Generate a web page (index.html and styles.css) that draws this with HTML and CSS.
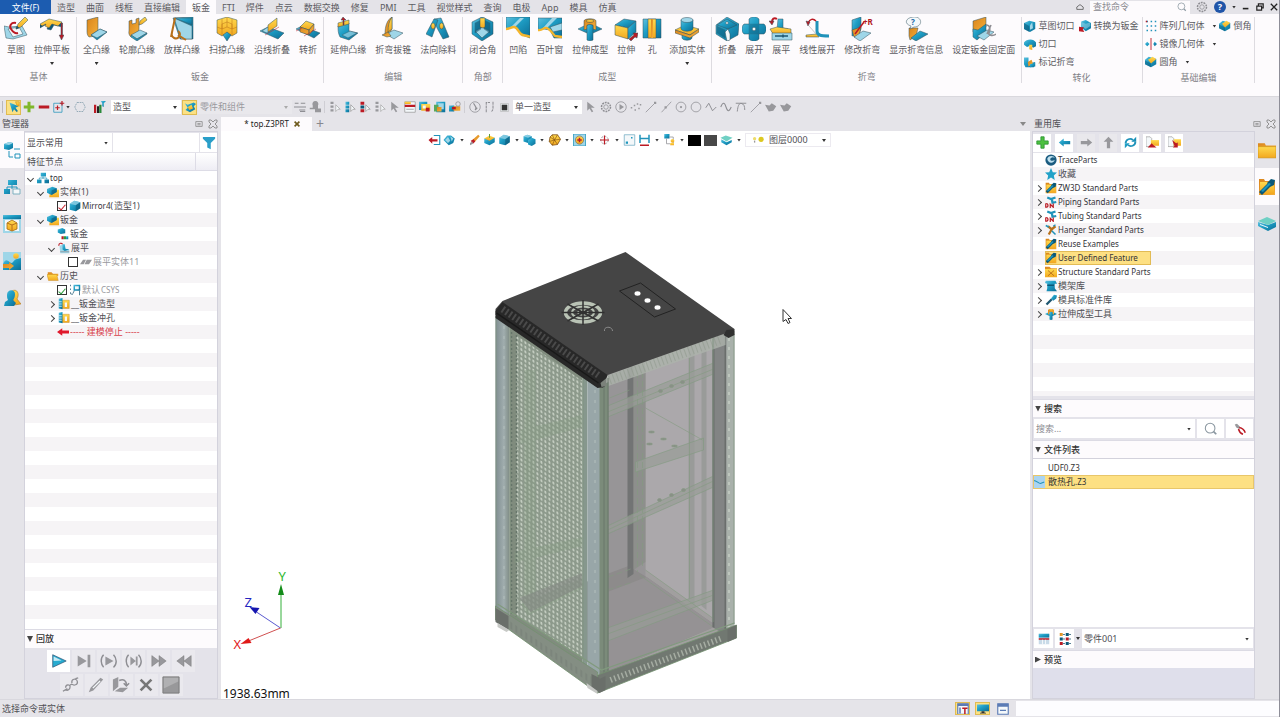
FILE: index.html
```html
<!DOCTYPE html>
<html lang="zh-CN">
<head>
<meta charset="utf-8">
<title>top.Z3PRT</title>
<link rel="stylesheet" href="styles.css">
</head>
<body>
<svg class="defs" aria-hidden="true">
<defs>
<linearGradient id="gb" x1="0" y1="0" x2="1" y2="1"><stop offset="0" stop-color="#5fc0de"/><stop offset=".4" stop-color="#1f9fc6"/><stop offset="1" stop-color="#0c6c94"/></linearGradient>
<linearGradient id="go" x1="0" y1="0" x2="1" y2="1"><stop offset="0" stop-color="#d9841c"/><stop offset="1" stop-color="#f5b03a"/></linearGradient>
<linearGradient id="gy" x1="0" y1="0" x2="0" y2="1"><stop offset="0" stop-color="#ffd94e"/><stop offset="1" stop-color="#f2a81f"/></linearGradient>
<symbol id="b-sketch" viewBox="0 0 24 24"><path class="lt" d="M0 9l5 1 13-1 5 9-14 4-7-1z"/><path class="w" d="M4 12l11-2 4 7-10 3z"/><path class="nf rs" stroke-width="2" d="M12 6c-5-1-7 3-5 6s4 5 7 4"/><path class="y" d="M12 12l2-5 7-7 3 3-7 7z"/><path class="dk" d="M12 12l1-3 2 2z"/></symbol>
<symbol id="b-plate" viewBox="0 0 24 24"><path class="dk" d="M0 8l9-4 13 2v4l-8-2-3 5-4-1 2-4-4 0-5 3z"/><path class="y" d="M0 7l9-5 13 3-4 4-6-2-3 4-4-2 1-2-4 2z"/><path class="r" d="M21 6h1.500v12h1.500l-2.500 5-2.300-5h1.800z"/></symbol>
<symbol id="b-flange" viewBox="0 0 24 24"><path class="o" d="M2 3l11-3v12c0 3-2 5-2 7l-7 1c-2-2-2-4-2-6z"/><path class="b" d="M6 18l9-6 7 3-10 8z"/><path class="lt" d="M6 18l9-6 7 3-10 6z"/></symbol>
<symbol id="b-contour" viewBox="0 0 24 24"><path class="o" d="M4 4l3-1v4l4-1V2l3-1v11c0 3-3 4-3 6l-5 2c-3-3-2-5-2-7z"/><path class="lt" d="M6 18l9-5 7 3-10 6z"/><path class="b" d="M6 18l6 4 10-6v1l-10 7-6-4z"/><path class="y" d="M14 8l1-4 5-4 2 3-5 4z"/></symbol>
<symbol id="b-loft" viewBox="0 0 24 24"><path class="b" d="M3 1l20-1v22H10z"/><path class="lt" d="M4 1l18 8v13H11z"/><path class="b" d="M5 1l17 0v7z"/><path class="nf os" stroke-width="2" d="M2 16a4 4 0 1 0 6-2M5 1L1 20M8 18l8 5"/></symbol>
<symbol id="b-sweep" viewBox="0 0 24 24"><path class="y" d="M2 3l10-3 10 3v13l-5 3-5-3-5 3-5-3z"/><path class="nf os" d="M7 2v16M17 2v16M2 10l5 2 5-2 5 2 5-2M12 0v10M7 12v-5l5-2 5 2v5"/><path class="b" d="M8 18l4-3 4 3-4 6z"/></symbol>
<symbol id="b-linefold" viewBox="0 0 24 24"><path class="b" d="M0 14l8-4 16 6-6 6z"/><path class="lt" d="M8 10l5 2-6 4-5-2z"/><path class="y" d="M8 15V8l9-7v8z"/><path class="nf rs" d="M5 18l14-8"/></symbol>
<symbol id="b-jog" viewBox="0 0 24 24"><path class="b" d="M0 12l6-3 18 7-6 5z"/><path class="y" d="M4 10l6-6 8 3-5 6z"/><path class="o" d="M4 10l9 3v5l-9-3zM13 13l5-6v5l-5 6z"/><path class="nf rs" d="M8 19l12-7M0 14l6-3"/></symbol>
<symbol id="b-extflange" viewBox="0 0 24 24"><path class="b" d="M2 9l11-3v8l9 2-9 7-9-3c-2-4-2-7-2-11z"/><path class="lt" d="M6 18l8-4 7 2-9 5z" opacity=".7"/><path class="y" d="M2 6l11-3v4L2 10z"/><path class="r" d="M5 3l2-3 3 3H8v5H7V3z"/></symbol>
<symbol id="b-taper" viewBox="0 0 24 24"><path class="o" d="M4 17C4 9 6 3 11 0v12l-4 7z"/><path class="y" d="M7 15c0-6 1-11 4-15v12z"/><path class="lt" d="M5 17l8-4 9 3-9 6z"/><path class="o" d="M1 18l6-3 3 4-4 1z"/></symbol>
<symbol id="b-normal" viewBox="0 0 24 24"><path class="b" d="M8 2l7-1 8 19-6 2-6-11z"/><path class="b" d="M8 2l4 1L6 20l-6-3z"/><ellipse class="y" cx="7" cy="9" rx="2" ry="3"/><ellipse class="y" cx="15.500" cy="9" rx="2" ry="3"/></symbol>
<symbol id="b-corner" viewBox="0 0 24 24"><path class="b" d="M1 5l10-5 11 5v12l-11 7-10-7z"/><path class="lt" d="M4 14l7-4 8 4-8 7z"/><path class="dk" d="M4 6l6-3v9l-6 4zM19 6l-6-3v9l6 4z" opacity=".65"/><path class="y" d="M9 1h5v9l-2 1-3-1z"/></symbol>
<symbol id="b-dimple" viewBox="0 0 24 24"><path class="b" d="M0 0h24v21l-8-3c-4-4-4-8-8-8-3 0-4 2-8 2z"/><path class="lt" d="M14 1h4L9 10H5z" stroke="none"/><path class="nf ys" stroke-width="2.500" d="M0 12c4 0 5-2 8-2s4 4 7 7c2 2 5 1 9 3"/></symbol>
<symbol id="b-louver" viewBox="0 0 24 24"><path class="b" d="M0 1h24v20h-8l-4-8-6-1-6 1z"/><path class="lt" d="M14 1h5L9 11H5z" stroke="none"/><path class="lt" d="M12 10l12-4v7l-9 2z"/><path class="nf ys" stroke-width="2.300" d="M0 13c5 1 5-3 9-2 4 2 5 5 8 8l7 1"/></symbol>
<symbol id="b-draw" viewBox="0 0 24 24"><path class="b" d="M0 12l8-4h8l8 4-9 4H9z"/><path class="o" d="M6 13V4c0-3 12-3 12 0v9l-3-1V8H9v4z"/><path class="y" d="M8 4c1-2 7-2 8 0-1 2-7 2-8 0z"/><path class="b" d="M9 9c1-2 5-2 6 0v14c-1 1-5 1-6 0z"/></symbol>
<symbol id="b-extrude" viewBox="0 0 24 24"><path class="b" d="M1 8l9-6 12 2-8 7z"/><path class="y" d="M1 8l13 3v11L1 18z"/><path class="b" d="M14 11l8-7v11l-8 7z"/><path class="r" d="M15 22l5-4-1-2 5 0-1 5-2-1-4 4z"/></symbol>
<symbol id="b-hole" viewBox="0 0 24 24"><path class="b" d="M3 2h18v19H3z"/><path class="y" d="M8 2h8v19H8z"/><path class="o" d="M11 2h2v19h-2z" stroke="none"/></symbol>
<symbol id="b-add" viewBox="0 0 24 24"><path class="b" d="M7 16h10v5c-1 3-9 3-10 0z"/><path class="y" d="M0 13l10-5 14 4-9 6z"/><path class="o" d="M0 13l15 5 9-6v3l-9 6-15-5z"/><path class="b" d="M6 3h12v9c-2 3-10 3-12 0z"/><ellipse class="lt" cx="12" cy="3" rx="6" ry="2.500"/></symbol>
<symbol id="b-fold" viewBox="0 0 24 24"><path class="b" d="M1 8l11-8 12 7-1 11-11 6-11-7z"/><path class="b" d="M2 8l10-6 10 6-9 4z"/><path class="w" d="M10 15l3-3 2 5v6l-3 1z"/><path class="dk" d="M2 9l8 4v8l-8-5z" opacity=".6"/><circle class="w" cx="12" cy="6" r="1.300"/></symbol>
<symbol id="b-unfold" viewBox="0 0 24 24"><path class="b" d="M7 2c3-3 7-3 10 0v5h5c3 3 3 7 0 10h-5v5c-3 3-7 3-10 0v-5H2c-3-3-3-7 0-10h5z"/><path class="dk" d="M7 7h10v10H7z" opacity=".4"/><circle class="w" cx="12" cy="12" r="1.800"/></symbol>
<symbol id="b-flat" viewBox="0 0 24 24"><path class="b" d="M9 2l5 0v9l5 1-6 3-5-2z"/><path class="y" d="M1 12l7-2 14 2v5H4z"/><path class="lt" d="M3 16h20v7H3z"/><path class="nf ds" stroke-width="1.500" d="M6 19h13M14 17.500v3"/><path class="nf rs" stroke-width="2" d="M8 2C5 0 3 2 3 5"/><path class="r" d="M0 4h5L3 8z"/></symbol>
<symbol id="b-linear" viewBox="0 0 24 24"><path class="y" d="M1 18l11-1 2 3H1z"/><path class="nf bs" stroke-width="3" d="M12 4v10c0 4 3 5 12 5"/><path class="nf gs" d="M4 9l8 9"/><path class="nf rs" stroke-width="1.500" d="M11 4C8 1 5 2 3 6"/><path class="r" d="M1 4l4 1-2 4z"/></symbol>
<symbol id="b-modify" viewBox="0 0 24 24"><path class="b" d="M2 3l9-3v12l-2 5-7 2z"/><path class="o" d="M2 13l9-3-2 9-5 1z"/><path class="lt" d="M4 20l9-6 8 2-11 8z"/><path class="nf rs" stroke-width="1.500" d="M5 17L14 5"/><text x="13" y="8" class="plusr">+R</text></symbol>
<symbol id="b-info" viewBox="0 0 24 24"><path class="o" d="M5 11l9 0-2 8-6 4-1-4z"/><path class="b" d="M7 21l9-7 8 3-12 7z"/><path class="w" d="M9 0c10-1 10 10 1 10l-4 2 1-3C0 7 1 1 9 0z"/><text x="7" y="8" class="qm">?</text></symbol>
<symbol id="b-fix" viewBox="0 0 24 24"><path class="o" d="M1 4l13-4v10L6 16l-5-1z"/><path class="b" d="M1 12l5 1 8-6v8l-9 8-4-3z"/><path class="lt" d="M5 19l10-6 7 2-10 8z"/><path class="nf gs" stroke-width="1.600" d="M14 8c5 0 4 5 3 8s5 3 7 1M19 8l-4 9"/></symbol>

<symbol id="cube" viewBox="0 0 16 16"><path class="b" d="M1 5l6-4 8 2v8l-6 4-8-2z"/><path class="lt" d="M1 5l6-4 8 2-6 4z" opacity=".7"/><path class="dk" d="M9 7l6-4v8l-6 4z" opacity=".6"/></symbol>
<symbol id="cubes" viewBox="0 0 16 16"><path class="b" d="M0 3l5-2 6 2v6l-5 3-6-2z"/><path class="b" d="M6 8l5-3 5 2v6l-5 3-5-2z"/><path class="lt" d="M0 3l5-2 6 2-5 2z" opacity=".8"/></symbol>
<symbol id="cubey" viewBox="0 0 16 16"><path class="b" d="M1 6v6l7 3 7-4V5z"/><path class="y" d="M1 6l7-4 7 3-7 4z"/><path class="nf gr" stroke-width="1.300" d="M8 0v5"/></symbol>
<symbol id="solid" viewBox="0 0 16 16"><path class="y" d="M4 5h12v10H3z"/><path class="b" d="M0 4l7-3 6 2v5l-7 4-6-3z"/><path class="dk" d="M6 6l7-3v5l-7 4z" opacity=".6"/></symbol>
<symbol id="chamfer" viewBox="0 0 16 16"><path class="b" d="M0 5l5-4 10 3v7l-7 4-8-4z"/><path class="y" d="M4 5l6-4 5 3-7 6z"/><path class="dk" d="M0 6l8 4v5l-8-4z" opacity=".5"/></symbol>
<symbol id="cutcorner" viewBox="0 0 16 16"><path class="b" d="M0 4l7-3 8 2v9l-7 4-8-4z"/><path class="dk" d="M0 4l7 4v8l-7-4z" opacity=".6"/><path class="lt" d="M8 7l3-4 1 8-4 2z"/></symbol>
<symbol id="slit" viewBox="0 0 16 16"><path class="b" d="M0 6c3-5 13-6 16 0v5l-4 2-3-3-5 2-4-3z"/><path class="y" d="M7 9h4v7l-4-1z"/></symbol>
<symbol id="convert" viewBox="0 0 16 16"><path class="b" d="M3 2l6-2 7 4v7l-7 4-6-5z"/><path class="lt" d="M4 3l5 2 6-2v5l-6 4-5-3z" opacity=".5"/><path class="r" d="M0 9l7 1-2 2 2 4-7-1z"/></symbol>
<symbol id="mark" viewBox="0 0 16 16"><path class="b" d="M0 2l6 0v8l9-2-2 7H2l-2-4z"/><path class="o" d="M5 8l5-3 2 5-6 4z"/><path class="b" d="M8 11l7-2v5l-7 1z"/></symbol>
<symbol id="dots" viewBox="0 0 16 16"><path class="nf bs" stroke-width="2" stroke-dasharray="2 3.500" d="M2 2h14M2 8h14M2 14h14"/><path class="r" d="M1 1h2v2H1z"/></symbol>
<symbol id="mirror" viewBox="0 0 16 16"><path class="nf rs" stroke-width="1.200" d="M8 0v16"/><path class="b" d="M3 5l3 3-3 3-3-3zM13 5l3 3-3 3-2-3z"/></symbol>

<symbol id="pick" viewBox="0 0 16 16"><path class="b" d="M2 2l4 13 2-4 4 4 1-2-3-4 4-2z"/><path class="y" stroke="#b97c12" stroke-width=".6" d="M10 1h5v6l-3-1z"/></symbol>
<symbol id="plus" viewBox="0 0 16 16"><path fill="#7fb72a" d="M6 1h4v5h5v4h-5v5H6v-5H1V6h5z"/></symbol>
<symbol id="plusg" viewBox="0 0 16 16"><path fill="#4cc040" stroke="#2a9232" d="M6 1h4v5h5v4h-5v5H6v-5H1V6h5z"/></symbol>
<symbol id="minus" viewBox="0 0 16 16"><path class="r" d="M1 6h14v4H1z"/></symbol>
<symbol id="selbox" viewBox="0 0 16 16"><path class="nf bs" stroke-width="1" d="M1 3h11v12H1z"/><path class="nf rs" stroke-width="1.600" d="M6 6v6M3 9h6M12 0v6M9 3h6"/></symbol>
<symbol id="hex" viewBox="0 0 16 16"><path class="nf" stroke="#7d9aa8" stroke-dasharray="2.500 1" d="M4 2h8l3 6-3 6H4L1 8z"/></symbol>
<symbol id="chart" viewBox="0 0 16 16"><path class="r" d="M0 5h3v11H0z"/><path fill="#222" d="M4 7h3v9H4z"/><path fill="#2a8a3a" d="M7 5h3v11H7z"/><path class="b" d="M9 0h7l-3 3v5l-2-1V3z"/></symbol>
<symbol id="comp" viewBox="0 0 16 16"><path class="b" d="M1 3l4 2 8-3 3 2-3 3 2 4-7 4-6-3 3-3z"/><path class="y" d="M5 8l5-3 2 5-5 2z"/></symbol>
<symbol id="lines" viewBox="0 0 16 16"><path class="nf gs" stroke-width="1.500" d="M1 3h5M9 3h6M0 8h16M7 12h8M8 14h7"/></symbol>
<symbol id="stamp" viewBox="0 0 16 16"><path class="g" d="M5 6a4 4 0 1 1 7 0v4h4v5H8v-4H1V9h4z"/></symbol>
<symbol id="lista" viewBox="0 0 16 16"><path class="g" d="M2 1h4v3H2zM2 6h4v3H2zM2 11h4v3H2z"/><path class="w" stroke="#aaa" d="M9 5l6 6h-3l-3 3z"/></symbol>
<symbol id="listb" viewBox="0 0 16 16"><path class="b" d="M2 1h5v4H2zM2 6h5v4H2zM2 11h5v4H2z"/><path class="w" stroke="#999" d="M9 5l6 6h-3l-3 3z"/></symbol>
<symbol id="listr" viewBox="0 0 16 16"><path class="r" d="M2 1h5v4H2zM2 11h5v4H2z"/><path class="dk" d="M2 6h5v4H2z"/><path class="w" stroke="#999" d="M9 5l6 6h-3l-3 3z"/></symbol>
<symbol id="arrowg" viewBox="0 0 16 16"><path class="g" d="M3 1l10 8-5 0 3 5-2 1-3-5-3 3z"/></symbol>
<symbol id="tbl" viewBox="0 0 16 16"><path class="w" stroke="#999" d="M1 1h14v14H1z"/><path class="r" d="M1 5h14v3H1z"/><path class="y" d="M1 1h8v3H1z"/><path class="nf gs" d="M3 11h10"/></symbol>
<symbol id="copyo" viewBox="0 0 16 16"><path class="b" d="M0 1h11v11H0z"/><path class="y" d="M3 4h12v9H3z"/><path class="r" d="M9 9h5v5H9z"/><path class="w" d="M5 6h4v4H5z"/></symbol>
<symbol id="copyb" viewBox="0 0 16 16"><path class="b" d="M3 1h12v14H3z"/><path class="lt" d="M5 3h8v8H5z"/><path fill="#59a85a" d="M0 5h6v9H0z"/><path class="o" d="M4 8h6v6H4z"/></symbol>
<symbol id="gearbox" viewBox="0 0 16 16"><path class="b" d="M0 6h7v8H0z"/><path class="o" d="M6 7h9v6H6z"/><path class="r" d="M4 8h5v3H4z"/><circle class="nf gs" cx="12" cy="4" r="3"/></symbol>
<symbol id="clock" viewBox="0 0 16 16"><circle class="nf gs" cx="8" cy="8" r="7"/><path class="nf gs" stroke-width="1.500" d="M6 3l3 5v4M8 12l3-3"/></symbol>
<symbol id="hook" viewBox="0 0 16 16"><path class="nf gs" stroke-width="1.400" d="M3 15V2h5M12 1v7c0 3 0 4-2 6" stroke-dasharray="4 1"/></symbol>
<symbol id="sq" viewBox="0 0 16 16"><path class="w" stroke="#aaa" d="M1 1h14v14H1z"/><path fill="#333" d="M3 3h10v10H3z"/></symbol>
<symbol id="gear" viewBox="0 0 16 16"><circle class="nf gs" cx="8" cy="8" r="6" stroke-width="2" stroke-dasharray="2.500 1.200"/><circle class="nf gs" cx="8" cy="8" r="3"/></symbol>
<symbol id="playc" viewBox="0 0 16 16"><circle class="nf gs" cx="8" cy="8" r="7"/><path class="g" d="M6 4l6 4-6 4z"/></symbol>
<symbol id="pts" viewBox="0 0 16 16"><path class="g" d="M1 8h2v2H1zM5 5h2v2H5zM9 3h2v2H9zM6 11h2v2H6zM11 9h2v2h-2zM13 4h2v2h-2z"/></symbol>
<symbol id="ln" viewBox="0 0 16 16"><path class="nf gs" d="M1 15L14 2"/><path class="g" d="M12 1h3v3h-3z"/></symbol>
<symbol id="ln2" viewBox="0 0 16 16"><path class="nf gs" d="M2 15L15 1"/><path class="g" d="M6 7h3v3H6z"/></symbol>
<symbol id="circ" viewBox="0 0 16 16"><circle class="nf gs" cx="8" cy="8" r="6.500"/></symbol>
<symbol id="circd" viewBox="0 0 16 16"><circle class="nf gs" cx="8" cy="8" r="6.500"/><circle class="g" cx="8" cy="8" r="1.500"/></symbol>
<symbol id="wave" viewBox="0 0 16 16"><path class="nf gs" stroke-width="1.400" d="M1 8c3-7 5-6 7 0s4 7 7 0"/></symbol>
<symbol id="zig" viewBox="0 0 16 16"><path class="nf gs" stroke-width="1.300" d="M1 9l4-6 5 10 5-5"/></symbol>
<symbol id="arc" viewBox="0 0 16 16"><path class="nf gs" stroke-width="1.300" d="M1 3h14M3 14C4 6 5 4 8 3c4 1 5 4 5 9"/></symbol>
<symbol id="surf" viewBox="0 0 16 16"><path class="g" d="M0 5l6 1 3-3 6 4-4 6-6 1z"/></symbol>

<symbol id="exit" viewBox="0 0 16 16"><path class="nf bs" stroke-width="1.500" d="M7 2h8v12H7"/><path class="r" d="M0 8l5-4v3h7v3H5v3z"/></symbol>
<symbol id="views" viewBox="0 0 16 16"><path class="b" d="M0 8l5-6 5 0 5 4-2 6-6 3z"/><path class="lt" d="M2 8l4-4 3 5-3 3zM9 3l4 3-2 4z"/></symbol>
<symbol id="brush" viewBox="0 0 16 16"><path class="o" d="M5 8l8-7 2 2-7 8z"/><path class="r" d="M3 9l4-2 2 3-3 3z"/><path class="g" d="M2 12l3-2 1 3-4 2z"/></symbol>
<symbol id="wire" viewBox="0 0 16 16"><path class="y" stroke="#7a4a10" d="M5 1h7l4 6-4 7-7 1-4-5 1-6z"/><path class="nf" stroke="#7a4a10" stroke-width=".8" d="M5 1l3 7-3 7M12 1L8 8l4 6M16 7L8 8 1 10M2 4l6 4"/></symbol>
<symbol id="zoomin" viewBox="0 0 16 16"><path class="lt" stroke="#2093ba" d="M0 0h16v16H0z"/><circle class="y" cx="8" cy="8" r="5.500" stroke="#777"/><path class="nf rs" stroke-width="2" d="M8 5v6M5 8h6"/></symbol>
<symbol id="target" viewBox="0 0 16 16"><circle class="nf gs" cx="8" cy="8" r="5" stroke-dasharray="3 1.500"/><path class="nf rs" stroke-width="1.600" d="M8 2v12M2 8h12"/></symbol>
<symbol id="box" viewBox="0 0 16 16"><path class="w" stroke="#6fa9c0" d="M1 1h14v14H1z"/><path class="b" d="M3 10h3v3H3zM10 4h2v2h-2z"/></symbol>
<symbol id="dim" viewBox="0 0 16 16"><path class="nf bs" stroke-width="2" d="M2 1v11M14 1v11M2 6h12"/><path class="nf rs" stroke-width="2" d="M2 15h12"/></symbol>
<symbol id="bulbt" viewBox="0 0 16 16"><path class="b" d="M1 0h7v6H1z"/><path class="nf gs" d="M4 6v7h5M8 4h5v9"/><circle class="y" cx="12" cy="9" r="2.500"/><path class="y" d="M9 12h5v3H9z"/></symbol>
<symbol id="layer" viewBox="0 0 16 16"><path class="b" d="M1 7l7 4 7-3v3l-7 4-7-4z"/><path fill="#6fd0c4" d="M0 5l7-3 9 3-8 5z"/></symbol>
<symbol id="bulbs" viewBox="0 0 20 16"><circle cx="4" cy="6" r="2.500" fill="#eedc6a"/><path class="g" d="M3 9h2v3H3z"/><circle cx="14" cy="7" r="4" fill="#dcc820"/></symbol>

<symbol id="org" viewBox="0 0 16 16"><path class="b" d="M5 1h7v5H5zM0 10h6v5H0zM10 10h6v5h-6z"/><path class="nf bs" stroke-width="1" d="M8 6v3M3 10V8h10v2"/></symbol>
<symbol id="sheet" viewBox="0 0 16 16"><path class="b" d="M1 2l6-2 4 2v5l-6 1-4-2z"/><path class="r" d="M6 11h3v4H6z"/><path fill="#2b9a3a" d="M9 11h3v4H9z"/><path class="b" d="M12 11h3v4h-3z"/></symbol>
<symbol id="flats" viewBox="0 0 16 16"><path class="lt" d="M2 5l6-2 1 6 6 1v5H3z"/><path class="b" d="M6 3l3 0 1 6 5 1-6 2-3-2z"/><path class="nf gs" d="M3 13h12"/><path class="nf rs" stroke-width="1.500" d="M1 5c0-4 4-4 5-2"/></symbol>
<symbol id="flatg" viewBox="0 0 16 16"><path class="g" d="M0 11l4-6h4l-3 6zM6 11l3-6h7l-4 6z"/></symbol>
<symbol id="folder" viewBox="0 0 16 16"><path class="o" d="M1 3h5l2 2h7v3H1z"/><path class="y" d="M0 6h13l2 8H2z" stroke="#b97c12" stroke-width=".5"/></symbol>
<symbol id="foldbig" viewBox="0 0 16 16"><path class="o" d="M0 2h6l1 2h9v3H0z"/><path class="y" d="M0 5h16v10H0z" stroke="#c98c12" stroke-width=".5"/></symbol>
<symbol id="csys" viewBox="0 0 16 16"><path class="b" d="M6 1h9v8H6z"/><path class="w" d="M8 3h5v4H8z"/><path class="nf ds" d="M2 1v2M2 6v2M2 11v2l3 1M7 9l-2 4M14 9v6"/></symbol>
<symbol id="feat" viewBox="0 0 16 16"><path class="y" d="M5 3h10v11H5z" stroke="#b97c12" stroke-width=".5"/><path class="w" d="M9 6h3v6H9z"/><path class="b" d="M1 1l5-1v15l-5-1z"/><path class="nf" stroke="#fff" d="M1 5h4M1 8h4M1 11h4"/></symbol>
<symbol id="stop" viewBox="0 0 16 16"><path fill="#e0182c" d="M0 8l7-5v3h9v4H7v3z"/></symbol>
<symbol id="funnel" viewBox="0 0 16 16"><path fill="#2a9fc9" d="M1 1h14v2L10 8v7l-4-2V8L1 3z"/></symbol>
<symbol id="hist" viewBox="0 0 18 18"><path class="b" d="M1 3l5-2 4 1v5L6 9 1 8z"/><path class="lt" d="M1 3l5-2 4 1-4 2z"/><path class="nf bs" stroke-width="1" d="M11 8h6M6 10v6h4M12 13h5v4h-5z"/></symbol>
<symbol id="assy" viewBox="0 0 18 18"><path class="b" d="M5 2h9v5H5zM1 11h6v5H1z"/><path class="w" stroke="#7fb0c0" d="M10 11h7v5h-7z"/><path class="nf bs" stroke-width="1" d="M9 7v4M4 11V9h10v2"/></symbol>
<symbol id="boxy" viewBox="0 0 18 18"><path class="lt" d="M0 0h18v18H0z"/><path class="b" d="M0 0h18v4H0z"/><path class="w" d="M2 5h14v11H2z"/><path class="y" d="M4 8l5-3 5 3v6l-5 2-5-2z" stroke="#a56a10" stroke-width=".8"/><path class="nf os" d="M4 8l5 2 5-2M9 10v6"/></symbol>
<symbol id="pic" viewBox="0 0 18 18"><path class="lt" d="M0 0h18v18H0z"/><path class="b" d="M0 12c4-9 7 2 10-2s5-3 8-4v12H0z"/><circle class="y" cx="13" cy="4" r="2.800"/><path class="o" d="M0 12h6v-2l5 4-5 4v-2H0z"/></symbol>
<symbol id="user" viewBox="0 0 18 18"><path class="y" stroke="#a56a10" stroke-width=".5" d="M9 2c5-3 8 3 5 8l4 5-7 1z"/><path class="b" d="M4 6c0-6 8-6 8-1 0 3-1 5-2 6l3 3-2 3H1l1-4 3-2C4 9 4 8 4 6z"/></symbol>
<symbol id="lib" viewBox="0 0 18 18"><path class="o" d="M1 1h5l1 2h10v14H1z"/><path class="y" d="M2 4h14v12H2z"/><path class="dk" d="M1 14l9-9 3 3-9 9zM9 5l4-4 4 1-1 5-4 2z"/><path class="b" d="M3 13l8-8 2 1-8 8z"/></symbol>
<symbol id="book" viewBox="0 0 18 18"><path class="b" d="M0 7l10 3 8-3v5l-8 4-10-5z"/><path fill="#6fd0c4" d="M0 6l9-4 9 4-8 4z"/><path class="w" d="M2 9l8 3v1L2 10z"/></symbol>

<symbol id="aleft" viewBox="0 0 16 16"><path class="b" d="M1 8l6-5v3h8v4H7v3z"/></symbol>
<symbol id="aright" viewBox="0 0 16 16"><path class="g" d="M15 8L9 3v3H1v4h8v3z"/></symbol>
<symbol id="aup" viewBox="0 0 16 16"><path class="g" d="M8 1l6 6h-4v8H6V7H2z"/></symbol>
<symbol id="sync" viewBox="0 0 16 16"><path class="nf bs" stroke-width="2.300" d="M2 9c0-5 6-7 9-4M14 7c0 5-6 7-9 4"/><path class="b" d="M9 7l6 0V1zM7 9H1v6z"/></symbol>
<symbol id="import" viewBox="0 0 16 16"><path class="w" stroke="#777" stroke-width=".6" d="M0 1h5l2 2v10H0z"/><path class="y" d="M6 5h10v7H6z"/><path class="r" d="M2 14l5-5 2 2 4 3z"/></symbol>
<symbol id="export" viewBox="0 0 16 16"><path class="w" stroke="#777" stroke-width=".6" d="M0 1h5l2 2v10H0z"/><path class="y" d="M7 4h9v8H7z"/><path class="r" d="M5 5l5 4 2-1v6H6l2-2z"/></symbol>
<symbol id="trace" viewBox="0 0 16 16"><circle cx="8" cy="8" r="7.500" fill="#1b5c80"/><path fill="#bfe0ee" d="M3 6c2-5 9-4 10-1-3-2-6 0-6 2s3 3 6 1c-2 6-10 4-10-2z"/></symbol>
<symbol id="star" viewBox="0 0 16 16"><path fill="#22a2c8" d="M8 0l2.400 5.500 5.600.5-4.200 4 1.200 6L8 12.800 3 16l1.200-6L0 6l5.600-.5z"/></symbol>
<symbol id="pipe" viewBox="0 0 16 16"><path class="nf bs" stroke-width="3" d="M3 2l5 2 6-2M9 4l1 5 5-1"/><path class="nf rs" stroke-width="1.600" d="M1 10v5c4 0 4-5 0-5M7 16v-5l4 4v-5"/></symbol>
<symbol id="hanger" viewBox="0 0 16 16"><path class="nf os" stroke-width="3" d="M4 3l5 4-4 7M9 7l5-4"/><path class="nf bs" stroke-width="2" d="M1 2l4 2M9 9l5 5M11 3l3-2"/></symbol>
<symbol id="struct" viewBox="0 0 16 16"><path class="o" d="M0 1h6l2 2h8v4H0z"/><path class="y" d="M0 4h16v11H0z"/><path class="nf os" stroke-width="1.200" d="M4 6l8 7M12 6l-8 7"/></symbol>
<symbol id="mold" viewBox="0 0 16 16"><path class="b" d="M1 1h13l2 4h-3v6l3 4H2l1-4V5L0 4z"/><path class="dk" d="M3 6h9v2H3z"/></symbol>
<symbol id="screw" viewBox="0 0 16 16"><path class="nf ds" stroke-width="3" d="M2 14l7-7"/><path class="b" d="M8 6l4-5 4 1-1 4-4 3z"/></symbol>
<symbol id="search" viewBox="0 0 16 16"><circle class="nf" stroke="#8a97a0" stroke-width="1.200" cx="7" cy="7" r="5.500"/><path class="nf" stroke="#8a97a0" stroke-width="2" d="M11 11l3 3"/></symbol>
<symbol id="plier" viewBox="0 0 16 16"><path class="g" d="M1 2l3-1 4 4-1 3-4-2z"/><path class="nf rs" stroke-width="2" d="M7 6c5 1 7 4 8 7M6 8c1 4 3 6 6 7"/></symbol>
<symbol id="wave2" viewBox="0 0 16 16"><path fill="#a9d4f2" d="M0 0h16v16H0z"/><path class="nf bs" stroke-width="1.500" d="M1 6c4 0 6 4 9 4l5-2"/></symbol>
<symbol id="calc" viewBox="0 0 16 16"><path fill="#c9dbe8" d="M1 1h14v14H1z"/><path class="b" d="M1 1h14v5H1z"/><path class="r" d="M1 7h14v2H1z"/><path class="nf" stroke="#fff" d="M6 9v6M10 9v6"/></symbol>
<symbol id="opts" viewBox="0 0 16 16"><path class="o" d="M1 0h4v4H1z"/><path class="dk" d="M1 6h4v4H1zM9 0h4v4H9zM9 12h4v4H9z"/><path class="r" d="M1 12h4v4H1zM9 6h4v4H9z"/><path class="nf ds" d="M5 2h3M5 8h3M5 14h3M13 2h3M13 8h3M13 14h3"/></symbol>
<symbol id="win" viewBox="0 0 16 16"><path class="w" stroke="#5b7bb5" stroke-width="1.500" d="M1 1h14v14H1z"/><path fill="#5b7bb5" d="M1 1h14v4H1zM4 9h8v1.500H4z"/></symbol>
<symbol id="wint" viewBox="0 0 16 16"><path class="w" stroke="#5b7bb5" stroke-width="1.500" d="M1 1h14v14H1z"/><path fill="#5b7bb5" d="M1 1h14v3H1zM3 6h2v8H3z"/><path class="nf rs" stroke-width="2" d="M7 7h7M10.500 7v8"/></symbol>
<symbol id="screen" viewBox="0 0 16 16"><path class="b" d="M0 2h16v9H0z"/><path fill="#333" d="M6 11h4v2h2v1H4v-1h2z"/></symbol>

<symbol id="play" viewBox="0 0 20 20"><path fill="#27abd0" stroke="#246" stroke-width=".7" d="M3 3l15 7-15 7z"/><path fill="#c7eaf4" d="M4 5l9 4.500-9 .5z"/></symbol>
<symbol id="tonext" viewBox="0 0 20 20"><path class="g" d="M3 4l10 6-10 6zM14 3h3v14h-3z"/></symbol>
<symbol id="pplay" viewBox="0 0 20 20"><path class="g" d="M6 5l9 5-9 5z"/><path class="nf gs" stroke-width="1.600" d="M4 3c-4 4-3 11 0 14M15 3c4 4 4 11 0 14"/></symbol>
<symbol id="pnext" viewBox="0 0 20 20"><path class="g" d="M6 5l6 5-6 5zM12 5h2v10h-2z"/><path class="nf gs" stroke-width="1.600" d="M4 3c-4 4-3 11 0 14M15 3c4 4 4 11 0 14"/></symbol>
<symbol id="ff" viewBox="0 0 20 20"><path class="g" stroke="#777" stroke-width=".5" d="M2 4l8 6-8 6zM10 4l8 6-8 6z"/></symbol>
<symbol id="rw" viewBox="0 0 20 20"><path class="g" stroke="#777" stroke-width=".5" d="M18 4l-8 6 8 6zM10 4l-8 6 8 6z"/></symbol>
<symbol id="chain" viewBox="0 0 20 20"><path class="nf gs" stroke-width="1.400" d="M1 17l5-3M4 13c0-4 5-4 5-1s-3 5-5 3M9 10l2-1M11 8c-1-5 5-6 6-2s-4 5-6 3M15 3l3-1"/></symbol>
<symbol id="pencil" viewBox="0 0 20 20"><path class="g" d="M2 18l2-5L15 2l3 2L7 16z"/><path class="w" d="M6 13l8-8 1 1-8 8z"/></symbol>
<symbol id="rot" viewBox="0 0 20 20"><path class="g" d="M1 4l6-3v11l-6 5zM3 17l6-4h9l-6 5z"/><path class="nf gs" stroke-width="1.700" d="M8 5c5-2 8 0 8 5M13 8l3 3 3-3"/></symbol>
<symbol id="x" viewBox="0 0 20 20"><path class="nf" stroke="#777" stroke-width="3" d="M4 4l12 12M16 4L4 16"/></symbol>
<symbol id="fillsq" viewBox="0 0 20 20"><path fill="#98989a" stroke="#777" d="M1 1h18v18H1z"/><path fill="#b0b0b2" d="M2 2h16v4L2 14z"/></symbol>
<symbol id="min" viewBox="0 0 10 10"><path fill="#222" d="M1 6h7v2H1z"/></symbol>
<symbol id="restore" viewBox="0 0 10 10"><path class="nf" stroke="#222" stroke-width="1.500" d="M3 4V1h6v5H7M1 4h6v5H1z"/></symbol>
<symbol id="close" viewBox="0 0 10 10"><path class="nf" stroke="#222" stroke-width="1.600" d="M1 1l8 8M9 1L1 9"/></symbol>
<symbol id="docx" viewBox="0 0 10 10"><path class="nf" stroke="#6e5a1c" stroke-width="2" d="M2 2l6 6M8 2L2 8"/></symbol>
<symbol id="dock" viewBox="0 0 10 10"><path class="nf" stroke="#888" d="M1 2h8v6H1zM3 4.500h4M3 6h4"/></symbol>
<symbol id="pclose" viewBox="0 0 10 10"><path class="nf" stroke="#888" stroke-width=".9" d="M1 1h2l2 2 2-2h2v2L7 5l2 2v2H7L5 7 3 9H1V7l2-2-2-2z"/></symbol>
<symbol id="home" viewBox="0 0 10 10"><path class="nf" stroke="#555" d="M1 8V5l4-3 4 3v3z"/></symbol>
</defs>
</svg>

<div class="app">
<header class="menubar">
  <nav class="tabs">
    <button class="tab file">文件(<span class="en">F</span>)</button>
    <button class="tab">造型</button><button class="tab">曲面</button><button class="tab">线框</button><button class="tab">直接编辑</button><button class="tab active">钣金</button><button class="tab">FTI</button><button class="tab">焊件</button><button class="tab">点云</button><button class="tab">数据交换</button><button class="tab">修复</button><button class="tab">PMI</button><button class="tab">工具</button><button class="tab">视觉样式</button><button class="tab">查询</button><button class="tab">电极</button><button class="tab">App</button><button class="tab">模具</button><button class="tab">仿真</button>
  </nav>
  <div class="winbar">
    <button class="ib" aria-label="主页"><svg class="i8"><use href="#home"/></svg></button>
    <label class="find"><input type="search" placeholder="查找命令" aria-label="查找命令"><svg class="i10"><use href="#search"/></svg></label>
    <button class="ib" aria-label="设置"><svg class="i12"><use href="#gear"/></svg></button>
    <button class="help" aria-label="帮助">?</button><i class="dn"></i>
    <button class="ib" aria-label="最小化"><svg class="i8"><use href="#min"/></svg></button>
    <button class="ib" aria-label="还原"><svg class="i8"><use href="#restore"/></svg></button>
    <button class="ib" aria-label="关闭"><svg class="i8"><use href="#close"/></svg></button>
  </div>
</header>

<section class="ribbon">
  <div class="group"><div class="tools">
    <button class="tool"><svg><use href="#b-sketch"/></svg>草图</button>
    <button class="tool"><svg><use href="#b-plate"/></svg>拉伸平板<i class="dn"></i></button>
  </div><h2>基体</h2></div>
  <div class="group"><div class="tools">
    <button class="tool"><svg><use href="#b-flange"/></svg>全凸缘<i class="dn"></i></button>
    <button class="tool"><svg><use href="#b-contour"/></svg>轮廓凸缘</button>
    <button class="tool"><svg><use href="#b-loft"/></svg>放样凸缘</button>
    <button class="tool"><svg><use href="#b-sweep"/></svg>扫掠凸缘</button>
    <button class="tool"><svg><use href="#b-linefold"/></svg>沿线折叠</button>
    <button class="tool"><svg><use href="#b-jog"/></svg>转折</button>
  </div><h2>钣金</h2></div>
  <div class="group"><div class="tools">
    <button class="tool"><svg><use href="#b-extflange"/></svg>延伸凸缘</button>
    <button class="tool"><svg><use href="#b-taper"/></svg>折弯拔锥</button>
    <button class="tool"><svg><use href="#b-normal"/></svg>法向除料</button>
  </div><h2>编辑</h2></div>
  <div class="group"><div class="tools">
    <button class="tool"><svg><use href="#b-corner"/></svg>闭合角</button>
  </div><h2>角部</h2></div>
  <div class="group"><div class="tools">
    <button class="tool"><svg><use href="#b-dimple"/></svg>凹陷</button>
    <button class="tool"><svg><use href="#b-louver"/></svg>百叶窗</button>
    <button class="tool"><svg><use href="#b-draw"/></svg>拉伸成型</button>
    <button class="tool"><svg><use href="#b-extrude"/></svg>拉伸</button>
    <button class="tool"><svg><use href="#b-hole"/></svg>孔</button>
    <button class="tool"><svg><use href="#b-add"/></svg>添加实体<i class="dn"></i></button>
  </div><h2>成型</h2></div>
  <div class="group"><div class="tools">
    <button class="tool"><svg><use href="#b-fold"/></svg>折叠</button>
    <button class="tool"><svg><use href="#b-unfold"/></svg>展开</button>
    <button class="tool"><svg><use href="#b-flat"/></svg>展平</button>
    <button class="tool"><svg><use href="#b-linear"/></svg>线性展开</button>
    <button class="tool"><svg><use href="#b-modify"/></svg>修改折弯</button>
    <button class="tool"><svg><use href="#b-info"/></svg>显示折弯信息</button>
    <button class="tool"><svg><use href="#b-fix"/></svg>设定钣金固定面</button>
  </div><h2>折弯</h2></div>
  <div class="group small"><div class="cols">
    <div class="col"><button class="row"><svg class="i12"><use href="#cutcorner"/></svg>草图切口</button><button class="row"><svg class="i12"><use href="#slit"/></svg>切口</button><button class="row"><svg class="i12"><use href="#mark"/></svg>标记折弯</button></div>
    <div class="col"><button class="row"><svg class="i12"><use href="#convert"/></svg>转换为钣金</button></div>
  </div><h2>转化</h2></div>
  <div class="group small"><div class="cols">
    <div class="col"><button class="row"><svg class="i12"><use href="#dots"/></svg>阵列几何体<i class="dn"></i></button><button class="row"><svg class="i12"><use href="#mirror"/></svg>镜像几何体<i class="dn"></i></button><button class="row"><svg class="i12"><use href="#chamfer"/></svg>圆角<i class="dn"></i></button></div>
    <div class="col"><button class="row"><svg class="i12"><use href="#chamfer"/></svg>倒角</button></div>
  </div><h2>基础编辑</h2></div>
</section>

<div class="quick">
  <span class="grip"></span>
  <button class="q on"><svg><use href="#pick"/></svg></button><button class="q"><svg><use href="#plus"/></svg></button><button class="q"><svg><use href="#minus"/></svg></button><button class="q"><svg><use href="#selbox"/></svg></button><i class="dn"></i><button class="q wide"><svg><use href="#hex"/></svg></button><button class="q wide"><svg><use href="#chart"/></svg></button>
  <span class="combo c1"><select aria-label="过滤器"><option>造型</option></select></span>
  <button class="q on"><svg><use href="#comp"/></svg></button>
  <span class="combo c2 off"><select aria-label="范围" disabled><option>零件和组件</option></select></span>
  <button class="q"><svg><use href="#lines"/></svg></button><button class="q"><svg><use href="#stamp"/></svg></button><span class="vs"></span>
  <button class="q"><svg><use href="#lista"/></svg></button><button class="q"><svg><use href="#listb"/></svg></button><button class="q"><svg><use href="#listr"/></svg></button><button class="q"><svg><use href="#lista"/></svg></button><button class="q"><svg><use href="#arrowg"/></svg></button><button class="q"><svg><use href="#tbl"/></svg></button><button class="q"><svg><use href="#copyo"/></svg></button><button class="q"><svg><use href="#copyb"/></svg></button><button class="q"><svg><use href="#gearbox"/></svg></button><span class="vs"></span>
  <button class="q"><svg><use href="#clock"/></svg></button><button class="q"><svg><use href="#hook"/></svg></button><button class="q"><svg class="sm"><use href="#sq"/></svg></button>
  <span class="combo c3"><select aria-label="选择模式"><option>单一造型</option></select></span>
  <button class="q"><svg><use href="#arrowg"/></svg></button><button class="q"><svg><use href="#gear"/></svg></button><button class="q"><svg><use href="#playc"/></svg></button><button class="q"><svg><use href="#pts"/></svg></button><button class="q"><svg><use href="#ln"/></svg></button><button class="q"><svg><use href="#ln2"/></svg></button><button class="q"><svg><use href="#circd"/></svg></button><button class="q"><svg><use href="#circ"/></svg></button><button class="q"><svg><use href="#zig"/></svg></button><button class="q"><svg><use href="#wave"/></svg></button><button class="q"><svg><use href="#arc"/></svg></button><button class="q"><svg><use href="#ln"/></svg></button><button class="q"><svg><use href="#surf"/></svg></button><button class="q"><svg><use href="#surf"/></svg></button>
</div>

<main class="body">
  <aside class="left">
    <div class="phead"><h2>管理器</h2><button class="ib" aria-label="停靠"><svg class="i8"><use href="#dock"/></svg></button><button class="ib" aria-label="关闭面板"><svg class="i10"><use href="#pclose"/></svg></button></div>
    <div class="pbody">
      <nav class="rail"><button class="on"><svg><use href="#hist"/></svg></button><button><svg><use href="#assy"/></svg></button><button><svg><use href="#boxy"/></svg></button><button><svg><use href="#pic"/></svg></button><button><svg><use href="#user"/></svg></button></nav>
      <div class="panel">
        <div class="filter"><span class="combo"><select aria-label="显示"><option>显示常用</option></select></span><input type="text" aria-label="筛选"><button aria-label="过滤"><svg class="i14"><use href="#funnel"/></svg></button></div>
        <div class="thead"><span>特征节点</span></div>
        <ul class="tree striped">
          <li class="l0"><i class="ex"></i><svg><use href="#org"/></svg><span class="en">top</span></li>
          <li class="l1"><i class="ex"></i><svg><use href="#solid"/></svg>实体(1)</li>
          <li class="l2"><input type="checkbox" class="red" checked aria-label="Mirror4"><svg><use href="#cube"/></svg><span class="en">Mirror4(</span>造型1)</li>
          <li class="l1"><i class="ex"></i><svg><use href="#solid"/></svg>钣金</li>
          <li class="l2"><svg><use href="#sheet"/></svg>钣金</li>
          <li class="l2x"><i class="ex"></i><svg><use href="#flats"/></svg>展平</li>
          <li class="l3 dim"><input type="checkbox" aria-label="展平实体11"><svg><use href="#flatg"/></svg>展平实体11</li>
          <li class="l1"><i class="ex"></i><svg><use href="#folder"/></svg>历史</li>
          <li class="l2 dim"><input type="checkbox" class="green" checked aria-label="默认CSYS"><svg><use href="#csys"/></svg>默认<span class="en">CSYS</span></li>
          <li class="l2x"><i class="ex shut"></i><svg><use href="#feat"/></svg>__钣金造型</li>
          <li class="l2x"><i class="ex shut"></i><svg><use href="#feat"/></svg>__钣金冲孔</li>
          <li class="l2 halt"><svg><use href="#stop"/></svg>----- 建模停止 -----</li>
        </ul>
        <h3 class="sec"><i class="tri"></i>回放</h3>
        <div class="replay">
          <div><button class="go" aria-label="播放"><svg><use href="#play"/></svg></button><button><svg><use href="#tonext"/></svg></button><button><svg><use href="#pplay"/></svg></button><button><svg><use href="#pnext"/></svg></button><button><svg><use href="#ff"/></svg></button><button><svg><use href="#rw"/></svg></button></div>
          <div><button><svg><use href="#chain"/></svg></button><button><svg><use href="#pencil"/></svg></button><button><svg><use href="#rot"/></svg></button><button><svg><use href="#x"/></svg></button><button><svg><use href="#fillsq"/></svg></button></div>
        </div>
      </div>
    </div>
  </aside>

  <section class="center">
    <div class="docs"><button class="doc"><span class="en">* top.Z3PRT</span><svg class="i8"><use href="#docx"/></svg></button><button class="new" aria-label="新建">+</button><i class="dn over"></i></div>
    <div class="view">
      <svg class="scene" viewBox="221 131 810 568" preserveAspectRatio="xMidYMid slice" role="img" aria-label="机柜模型">
        <defs>
          <pattern id="mesh" width="4" height="4.600" patternUnits="userSpaceOnUse" patternTransform="skewY(30)"><rect width="4" height="4.600" fill="#8c998b"/><ellipse cx="1.900" cy="2.200" rx="1" ry="1.500" fill="#c3ccc0"/></pattern>
          <pattern id="slotL" width="5" height="30" patternUnits="userSpaceOnUse"><path d="M1 0h1.500v30H1z" fill="#6f776f"/></pattern>
          <linearGradient id="leftp" x1="0" x2="1"><stop offset="0" stop-color="#7f8d90"/><stop offset=".6" stop-color="#a0adae"/><stop offset="1" stop-color="#7f8c85"/></linearGradient>
        </defs>
        <path fill="#a19f9f" d="M608 385l119-52v302l-119 38z"/>
        <path fill="#aba8ab" d="M646 360l67-27v285l-67-48z"/>
        <path fill="#979597" d="M608 372l38-12v218l-38 18z"/>
        <path fill="#8d8b8b" d="M538 600l91-34 18 11 70 49-109 46-98-50z"/>
        <path fill="#959294" d="M608 592l39-15 70 49-109 46z"/>
        <path fill="#727474" d="M628 366h6v208l-6 4z"/>
        <path fill="#838a82" d="M634 366h12v196l-12 8z" opacity=".5"/>
        <path fill="#8a908a" d="M689 345h6v260l-6-5zM702 340h5v270l-5-4z" opacity=".55"/>
        <g fill="#989c97" stroke="#829a7f" stroke-width=".6" fill-opacity=".7">
          <path d="M608 406l106-43v11l-106 43zM608 526l106-50v11l-106 47zM608 628l106-38v10l-106 41zM636 462l68-24v12l-68 22z"/>
        </g>
        <g fill="none" stroke="#839a80" stroke-width=".6">
          <path d="M646 408l57 32M608 412l106-43M608 530l106-49M608 634l106-39M690 358v240M608 373l126-44M610 398l20-8M646 570l70 50M640 575l78 55"/>
          <path d="M600 580l34-12M608 590l26-8M638 372v200M643 372v194" stroke-dasharray="6 3"/>
          <g fill="#8a8f88"><ellipse cx="661" cy="391" rx="2" ry="1.500"/><ellipse cx="672" cy="386" rx="2" ry="1.500"/><ellipse cx="683" cy="382" rx="2" ry="1.500"/><ellipse cx="660" cy="500" rx="2" ry="1.500"/><ellipse cx="672" cy="495" rx="2" ry="1.500"/><ellipse cx="684" cy="490" rx="2" ry="1.500"/><ellipse cx="652" cy="432" rx="3" ry="1"/><ellipse cx="664" cy="439" rx="3" ry="1"/><ellipse cx="650" cy="444" rx="3" ry="1"/><ellipse cx="675" cy="446" rx="3" ry="1"/></g>
        </g>
        <path fill="#828484" d="M713 334h14v302l-14-9z"/><path fill="#6a6e6c" d="M713 334h2v294l-2-1zM725 331h2v304h-2z"/>
        <path fill="#a9b1ab" d="M727 331h8v300l-8 4z"/><path stroke="#d3dbd0" stroke-dasharray="3 6" d="M729.500 338v290"/>
        <path fill="#adb3ab" opacity=".8" d="M606 376l120-45v14l-120 42z"/>
        <path stroke="#8c9689" stroke-width="9" stroke-dasharray="1 3" opacity=".5" d="M610 380l110-40"/>

        <path fill="url(#leftp)" d="M496 316l14 9v296l-14-10z"/>
        <path fill="#808c7e" d="M510 325l73 50v292l-73-46z"/>
        <path fill="url(#mesh)" d="M517 335l66 46v276l-66-41z"/>
        <path fill="#849a80" opacity=".35" d="M521 430l62-15v12l-62 17zM525 370h11v240l-11-7zM515 552l68-15v9l-68 17zM522 604l61-26v10l-55 28z"/>
        <path fill="#838883" opacity=".6" d="M520 598l63-25v13l-52 26z"/>
        <path stroke="#66756a" stroke-width="1.500" stroke-dasharray="2 2" d="M512 332v284M517 335v282"/>
        <path fill="#86978d" d="M583 374l5 4v294l-5-3z"/><path fill="#98a6a8" d="M588 378l13 8v289l-13-6z"/><path fill="#7b8b7a" d="M600 386l9-4v293l-5 4-4-2z"/>
        <path stroke="#6a766b" d="M604.500 386v290M608.500 378v294"/>
        <path stroke="#b3bfbc" stroke-dasharray="3 7" d="M504.500 326v280M595.500 390v270"/>
        <path stroke="#819680" stroke-width=".8" d="M496.500 316v292M510.500 326v288M583.500 374v292M734.500 334v290M713.500 337v285" fill="none"/>

        <path fill="#848e83" stroke="#739170" stroke-width=".8" d="M496 606l102 66v21l-102-73z"/>
        <path fill="url(#slotL)" opacity=".5" d="M510 621l82 56v7l-82-56z"/>
        <path fill="#717871" stroke="#739170" stroke-width=".8" d="M598 675l139-50v13l-139 55z"/>
        <path stroke="#a5aca2" stroke-width="6" stroke-dasharray="1.500 2.500" d="M611 680l112-42"/>
        <path fill="#6a6f6a" d="M496 608l13 8v14l-13-8zM592 674l8 4v15l-8-6zM600 679l6-3v14l-6 3zM728 629l9-4v13l-9 4z"/>
        <path fill="#c7c9c6" d="M498 623l12 7-3 2-9-5zM587 683l11 8v3l-10-6z"/>
        <path fill="none" stroke="#819a7e" stroke-width="1.200" d="M498 604l104 66 133-47"/>

        <path fill="#454545" d="M626 252l109 77-8 4-119 42-5 13-107-73v-6l7-8z"/>
        <path fill="#282828" d="M503 302l-7 9v7l102 70 7-1v-5l3-7z"/>
        <path stroke="#4a4a4a" stroke-width="7" stroke-dasharray="2 2.400" d="M503 309l97 67" fill="none"/>
        <path stroke="#191919" stroke-width="1.500" d="M497 313l102 70" fill="none"/>
        <path fill="#303030" d="M727 330l8-1v6l-6 3-5-3z"/><path fill="#7c827b" d="M601 383l6-5v8l-5 1z"/>
        <g fill="none" stroke="#b9c3b5"><ellipse cx="583.500" cy="312.500" rx="17.500" ry="9.500" stroke-width="3.500"/><ellipse cx="583.500" cy="312.500" rx="11" ry="6" stroke-width="2"/><ellipse cx="583.500" cy="312.500" rx="5" ry="2.500" stroke-width="1.500"/></g>
        <path stroke="#303030" stroke-width="1.500" d="M583.500 300v25M562 312.500h43M568 304l31 17M599 304l-31 17"/>
        <path fill="none" stroke="#222" d="M641 283l35 26-21 8-35-26z"/>
        <g fill="#fff"><ellipse cx="638" cy="293.500" rx="3" ry="2.200"/><ellipse cx="648" cy="300.500" rx="3" ry="2.200"/><ellipse cx="658" cy="307.500" rx="3" ry="2.200"/></g>
        <path fill="none" stroke="#8b8b8b" d="M605 331c-1-5 8-5 8 0"/>

        <path stroke="#35b03a" d="M281.500 628v-34"/><path fill="#148c1a" d="M281.500 584l3 11h-6z"/>
        <path stroke="#5a5ad0" d="M281 628l-24-16"/><path fill="#1515b0" d="M250 607l10 1-4 6z"/>
        <path stroke="#d05050" d="M281 628l-32 13"/><path fill="#e01818" d="M241 644l8-6 3 5z"/>
        <text class="ax" x="279" y="581" fill="#2db82d">Y</text><text class="ax" x="245" y="607" fill="#2424c0">Z</text><text class="ax" x="234" y="649" fill="#e02020">X</text>
        <path fill="#fff" stroke="#333" d="M783.500 309.500v12l3-2 2 4 2-1-2-4h3.500z"/>
      </svg>
      <div class="vtools">
        <button><svg><use href="#exit"/></svg></button><button><svg><use href="#views"/></svg></button><i class="dn"></i><button><svg><use href="#brush"/></svg></button><button><svg><use href="#cubey"/></svg></button><button><svg><use href="#cube"/></svg></button><i class="dn"></i><button><svg><use href="#cubes"/></svg></button><i class="dn"></i><button><svg><use href="#wire"/></svg></button><i class="dn"></i><button><svg><use href="#zoomin"/></svg></button><i class="dn"></i><button><svg><use href="#target"/></svg></button><i class="dn"></i><button><svg><use href="#box"/></svg></button><button><svg><use href="#dim"/></svg></button><i class="dn"></i><button><svg><use href="#bulbt"/></svg></button><i class="dn"></i><button class="sw black" aria-label="黑"></button><button class="sw grey" aria-label="灰"></button><button><svg><use href="#layer"/></svg></button><i class="dn"></i>
        <span class="combo lay"><svg><use href="#bulbs"/></svg><select aria-label="图层"><option>图层0000</option></select></span>
      </div>
      <span class="scale">1938.63mm</span>
    </div>
  </section>

  <aside class="right">
    <div class="phead"><h2>重用库</h2><button class="ib" aria-label="停靠"><svg class="i8"><use href="#dock"/></svg></button><button class="ib" aria-label="关闭面板"><svg class="i10"><use href="#pclose"/></svg></button></div>
    <div class="pbody">
      <div class="panel">
        <div class="ltools"><button><svg><use href="#plusg"/></svg></button><button><svg><use href="#aleft"/></svg></button><button class="no"><svg><use href="#aright"/></svg></button><button class="no"><svg><use href="#aup"/></svg></button><button><svg><use href="#sync"/></svg></button><button><svg><use href="#import"/></svg></button><button><svg><use href="#export"/></svg></button></div>
        <ul class="tree lib striped">
          <li><i class="ex none"></i><svg><use href="#trace"/></svg><span class="en">TraceParts</span></li>
          <li><i class="ex none"></i><svg><use href="#star"/></svg>收藏</li>
          <li><i class="ex shut"></i><svg><use href="#lib"/></svg><span class="en">ZW3D Standard Parts</span></li>
          <li><i class="ex shut"></i><svg><use href="#pipe"/></svg><span class="en">Piping Standard Parts</span></li>
          <li><i class="ex shut"></i><svg><use href="#pipe"/></svg><span class="en">Tubing Standard Parts</span></li>
          <li><i class="ex shut"></i><svg><use href="#hanger"/></svg><span class="en">Hanger Standard Parts</span></li>
          <li><i class="ex none"></i><svg><use href="#lib"/></svg><span class="en">Reuse Examples</span></li>
          <li><i class="ex none"></i><span class="hit"><svg><use href="#lib"/></svg><span class="en">User Defined Feature</span></span></li>
          <li><i class="ex shut"></i><svg><use href="#struct"/></svg><span class="en">Structure Standard Parts</span></li>
          <li><i class="ex shut"></i><svg><use href="#mold"/></svg>模架库</li>
          <li><i class="ex shut"></i><svg><use href="#screw"/></svg>模具标准件库</li>
          <li><i class="ex shut"></i><svg><use href="#b-draw"/></svg>拉伸成型工具</li>
        </ul>
        <h3 class="sec gap"><i class="tri"></i>搜索</h3>
        <div class="srow"><span class="combo"><input type="text" placeholder="搜索..." aria-label="搜索"></span><button aria-label="搜索"><svg class="i14"><use href="#search"/></svg></button><button aria-label="清除"><svg class="i12"><use href="#plier"/></svg></button></div>
        <h3 class="sec"><i class="tri"></i>文件列表</h3>
        <ul class="files"><li><span class="en">UDF0.Z3</span></li><li class="sel"><svg><use href="#wave2"/></svg>散热孔<span class="en">.Z3</span></li></ul>
        <div class="prow"><button><svg class="i12"><use href="#calc"/></svg></button><button><svg class="i12"><use href="#opts"/></svg></button><i class="dn"></i><span class="combo"><select aria-label="零件"><option>零件001</option></select></span></div>
        <h3 class="sec"><i class="tri side"></i>预览</h3>
        <div class="rest"></div>
      </div>
      <nav class="rail"><button><svg><use href="#foldbig"/></svg></button><button class="on"><svg><use href="#lib"/></svg></button><button><svg><use href="#book"/></svg></button></nav>
    </div>
  </aside>
</main>

<footer class="status"><span class="msg">选择命令或实体</span><button class="q on"><svg><use href="#wint"/></svg></button><button class="q on"><svg><use href="#screen"/></svg></button><button class="q"><svg><use href="#win"/></svg></button><span class="blank"></span></footer>
</div>
</body>
</html>
```
FILE: styles.css
```css
*{box-sizing:border-box}
body{margin:0;font-family:"Noto Sans","Noto Sans CJK SC",sans-serif;font-size:9px;line-height:12px;color:#505055;background:#e5e4e9}
button,input,select{font:inherit;color:inherit;border:0;background:none;padding:0;margin:0;border-radius:0;outline:0}
select,input[type=search]{appearance:none}
h2,h3,ul{margin:0;padding:0;font-size:9px;font-weight:400;list-style:none}
svg{display:block;flex:none;overflow:visible}
.defs{position:absolute;width:0;height:0}
.en{font-size:8px}
.b{fill:url(#gb)}.dk{fill:#0b5878}.lt{fill:#9fd6e8}.o{fill:url(#go)}.y{fill:url(#gy)}.r{fill:#bb1a24}.g{fill:#98989c}.w{fill:#f4f8fa}
.nf{fill:none}.rs{stroke:#bb1a24}.bs{stroke:#2093ba}.os{stroke:#b8701a}.ys{stroke:#f4b52c}.gs{stroke:#8e8e93}.ds{stroke:#1d5570}.gr{stroke:#5a9a3a}
.plusr{font:bold 8px "Noto Sans",sans-serif;fill:#b01820;stroke:none}
.qm{font:bold 8px "Noto Sans",sans-serif;fill:#1668a8;stroke:none}
.i8{width:8px;height:8px}.i10{width:10px;height:10px}.i12{width:12px;height:12px}.i14{width:14px;height:14px}
.dn{flex:none;width:4px;height:3px;background:#333;clip-path:polygon(0 0,100% 0,50% 100%)}
.app{display:flex;flex-direction:column;height:100vh;border-right:1px solid #8e8e98}

.menubar{display:flex;justify-content:space-between;height:14px;background:#e4e3e8}
.tabs{display:flex;gap:1px}
.tab{padding:0 5px;height:14px;white-space:nowrap;color:#5c5c62;line-height:13px}
.tab.file{width:51px;background:#1c5cb0;color:#fff}
.tab.active{background:#fdfbfd;padding:0 6px}
.winbar{display:flex;align-items:center;gap:6px;padding-right:1px}
.find{display:flex;align-items:center;width:100px;height:13px;background:#fdfbfd;padding:0 3px}
.find input{flex:1;min-width:0}
::placeholder{color:#8a8a90;opacity:1}
.help{width:12px;height:12px;border-radius:50%;background:#1f55a8;color:#fff;font-weight:700;line-height:12px}

.ribbon{display:flex;height:83px;padding-left:1px;background:#fdfbfd;border-bottom:1px solid #d9d8dd}
.group{display:flex;flex-direction:column;margin:3px 0 13px;padding:0 6px;border-right:1px solid #dddbe0}
.group h2{text-align:center;line-height:13px;color:#808086}
.tools,.cols{display:flex;flex:1;gap:9px;color:#5c5c62}
.tool{display:flex;flex-direction:column;align-items:center;min-width:16px;height:51px;white-space:nowrap;line-height:14px}
.tool svg{width:24px;height:24px;margin:0 -4px 2px;stroke:#31505c;stroke-width:.5;stroke-linejoin:round}
.tool .dn{margin-top:5px}
.cols{gap:5px}
.row{display:flex;align-items:center;gap:2px;height:18px;white-space:nowrap}
.row .dn{margin-left:6px}
.group.small{padding:0 4px 0 2px}
.group.small:last-child{padding:0 3px 0 2px}
.small:last-child .cols{gap:3px}

.quick{display:flex;align-items:center;height:20px;padding-left:2px}
.grip{width:1px;height:12px;background:#b9b8be;margin-right:3px}
.q{display:flex;align-items:center;justify-content:center;flex:none;width:15px;height:15px}
.q.wide{width:20px}
.q svg{width:12px;height:12px}
.q svg.sm{width:9px;height:9px}
.q.on{background:#fbe184;outline:1px solid #e0bb52;outline-offset:-1px}
.vs{width:1px;height:12px;background:#cfced4;margin:0 2px}
.combo{position:relative;display:flex;align-items:center;background:#fff;height:14px}
.combo select,.combo input{flex:1;min-width:0;width:100%;height:100%;padding:0 2px}
.combo::after{content:"";position:absolute;right:4px;top:calc(50% - 1px);width:4px;height:3px;background:#333;clip-path:polygon(0 0,100% 0,50% 100%);pointer-events:none}
.c1{width:70px;margin:0 1px}.c2{width:94px;margin-left:1px}.c3{width:69px;margin:0 1px}
.off{background:#e9e8ec;color:#99999e}.off::after{background:#aaa}
.off select{opacity:1;color:#99999e}

.body{flex:1;min-height:0;display:grid;grid-template-columns:221px 1fr 249px}
.left,.right,.center{display:flex;flex-direction:column;min-width:0;min-height:0}
.phead{display:flex;align-items:center;gap:5px;height:14px;flex:none}
.phead h2{flex:1;padding-left:2px}
.left .phead{padding-right:3px}
.right .phead{padding:0 3px 0 2px}
.pbody{flex:1;min-height:0;display:flex}
.left .pbody{padding-right:3px}
.rail{width:24px;flex:none;display:flex;flex-direction:column}
.rail button{height:37px;display:flex;align-items:center;justify-content:center}
.rail button.on{background:#fdfbfd}
.rail svg{width:18px;height:18px}
.panel{flex:1;min-width:0;display:flex;flex-direction:column;border:1px solid #d3d2dc;background:#e4e3ea}
.filter{display:flex;gap:1px;height:21px;padding:1px 0;flex:none}
.filter .combo{width:87px;height:19px}
.filter>input{flex:1;min-width:0;background:#fff}
.filter button{width:17px;display:flex;align-items:center;justify-content:center;background:#fff}
.thead{height:18px;flex:none;background:linear-gradient(#fff,#eeedf4);padding-left:2px;line-height:18px;border-bottom:1px solid #dddce6}
.thead span{display:block;margin-right:21px;border-right:1px solid #dddce6}
.striped{flex:1;min-height:0;overflow:hidden;background:repeating-linear-gradient(#fff 0 14px,#f6f4f6 14px 28px)}
.tree li{display:flex;align-items:center;height:14px;white-space:nowrap;gap:1px}
.tree svg{width:12px;height:12px}
.tree .en{color:#333338}
.ex{flex:none;width:11px;height:8px;display:flex;align-items:center;justify-content:center}
.ex::before{content:"";width:4px;height:4px;border:solid #444;border-width:0 1px 1px 0;transform:rotate(45deg)}
.ex.shut::before{transform:rotate(-45deg)}
.ex.none::before{content:none}
.l1{padding-left:10px}.l2{padding-left:32px}.l2x{padding-left:21px}.l3{padding-left:43px}
.dim{color:#99999e}.tree .dim .en{color:#99999e}
.halt{color:#d8404a}
.tree input{appearance:none;flex:none;width:10px;height:10px;border:1px solid #333;background:#fff;margin-right:1px;display:flex;align-items:center;justify-content:center}
.tree input:checked::before{content:"";width:3px;height:6px;border:solid #c8202c;border-width:0 1px 1px 0;transform:rotate(40deg)}
.tree input.green:checked::before{border-color:#2a9a3a}
.sec{display:flex;align-items:center;gap:3px;height:18px;flex:none;padding-left:2px;background:#fdfbfd;border-top:1px solid #dcdbe4;color:#333;font-weight:500}
.tri{width:6px;height:6px;background:#444;clip-path:polygon(0 0,100% 0,50% 100%)}
.tri.side{clip-path:polygon(0 0,100% 50%,0 100%)}
.left .sec{height:19px}
.replay{flex:none;padding:2px 0;display:flex;flex-direction:column;gap:2px}
.replay div{display:flex;justify-content:center;gap:2px}
.replay button{width:23px;height:22px;display:flex;align-items:center;justify-content:center;background:#eae9ee}
.replay button.go{background:#fff}
.replay svg{width:18px;height:18px}

.docs{display:flex;align-items:center;height:14px;flex:none}
.doc{display:flex;align-items:center;justify-content:flex-end;gap:4px;width:91px;height:14px;padding-right:11px;background:#fdfbfd;color:#222}
.new{width:16px;color:#88888e;font-size:14px;line-height:14px}
.over{margin-left:auto;margin-right:4px;width:6px;height:4px;background:#888}
.view{position:relative;flex:1;min-height:0;background:#fff;overflow:hidden}
.scene{position:absolute;inset:0;width:100%;height:100%}
.ax{font:13px "Noto Sans",sans-serif}
.vtools{position:relative;display:flex;align-items:center;justify-content:center;gap:2px;height:18px;padding-left:8px}
.vtools button,.vtools svg{width:13px;height:12px}
.vtools .dn{margin:0 2px}
.vtools .sw{height:11px;margin-right:1px}
.vtools .black{background:#000}
.vtools .grey{background:#484848}
.lay{width:86px;border:1px solid #eceaf0;padding-left:6px}
.lay svg{margin-right:2px}
.scale{position:absolute;left:2px;bottom:0;font-size:12px;line-height:17px;height:14px;color:#111}

.right .pbody{padding-left:2px}
.ltools{display:flex;gap:4px;height:21px;flex:none;align-items:center}
.ltools button{width:18px;height:18px;display:flex;align-items:center;justify-content:center;background:#fff}
.ltools .no{background:#e9e8ec}
.ltools svg{width:13px;height:13px}
.lib .hit{display:flex;align-items:center;gap:1px;height:14px;padding-right:13px;background:#fde083;outline:1px solid #e2bb55;outline-offset:-1px}
.sec.gap{margin-top:3px}
.srow,.prow{display:flex;gap:2px;height:23px;flex:none;padding:2px 1px}
.srow .combo,.prow .combo{flex:1;height:auto}
.srow button{width:27px;display:flex;align-items:center;justify-content:center;background:#fff}
.files{height:169px;flex:none;background:#fff;padding-top:2px;border-top:1px solid #d3d2dc}
.files li{height:14px;display:flex;align-items:center;padding-left:15px;color:#333}
.files li.sel{padding-left:0;background:#fde083;outline:1px solid #e8c66a;outline-offset:-1px}
.files svg{width:12px;height:12px;margin-right:3px}
.prow button{width:19px;display:flex;align-items:center;justify-content:center;background:#fff}
.prow .dn{align-self:center}
.rest{height:30px;flex:none;background:#dfdfeb}

.status{display:flex;align-items:center;height:18px;flex:none;gap:5px;border-top:1px solid #d9d8de}
.msg{flex:1;padding-left:2px}
.status .q{height:13px}
.blank{width:263px;height:15px;background:#fdfdff;margin-left:1px}
```
